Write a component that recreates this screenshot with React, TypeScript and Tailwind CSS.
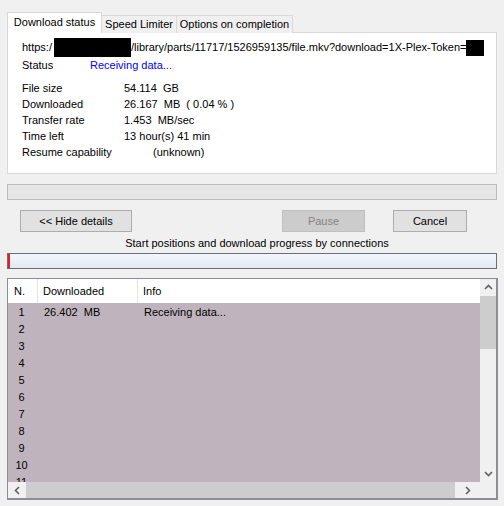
const rows = ["1", "2", "3", "4", "5", "6", "7", "8", "9", "10", "11"];

function Chevron({ dir }: { dir: "up" | "down" | "left" | "right" }) {
  const pts = {
    up: "1,6 4.5,2.5 8,6",
    down: "1,3 4.5,6.5 8,3",
    left: "6,1 2.5,4.5 6,8",
    right: "3,1 6.5,4.5 3,8",
  }[dir];
  return (
    <svg width="9" height="9" viewBox="0 0 9 9">
      <polyline points={pts} fill="none" stroke="#606060" strokeWidth="1.6" />
    </svg>
  );
}

function Field({ label, children }: { label: string; children: React.ReactNode }) {
  return (
    <div className="flex h-[16px] items-center">
      <span className="w-[102px] shrink-0">{label}</span>
      {children}
    </div>
  );
}

export default function App() {
  return (
    <div className="h-[506px] w-[504px] overflow-hidden bg-[#f0f0f0] px-[7px] pt-[12px] font-['Liberation_Sans',Arial,sans-serif] text-[11px] leading-none text-black">
      {/* tabs */}
      <div className="flex h-[21px] items-end">
        <div className="relative z-10 flex h-[21px] w-[95px] items-start justify-center border border-b-0 border-[#d9d9d9] bg-white pt-[4px]">
          Download status
        </div>
        <div className="flex h-[18px] w-[75px] items-center justify-center border border-l-0 border-b-0 border-[#d9d9d9] bg-[#f0f0f0]">
          Speed Limiter
        </div>
        <div className="flex h-[18px] w-[116px] items-center justify-center border border-l-0 border-b-0 border-[#d9d9d9] bg-[#f0f0f0]">
          Options on completion
        </div>
      </div>

      {/* tab panel */}
      <div className="-mt-px h-[142px] w-[490px] border border-[#d9d9d9] bg-white pl-[14px] pt-[5px]">
        <div className="flex h-[19px] items-center">
          <span>https:/</span>
          <span className="ml-[2px] inline-block h-[19px] w-[77px] bg-black" />
          <span>/library/parts/11717/1526959135/file.mkv?download=1X-Plex-Token=</span>
          <span className="inline-block h-[16px] w-[18px] bg-black" />
        </div>
        <div className="flex h-[16px] items-center">
          <span className="w-[68px]">Status</span>
          <span className="text-[#0000ff]">Receiving data...</span>
        </div>
        <div className="mt-[7px] flex flex-col">
          <Field label="File size">
            <span className="whitespace-pre">54.114  GB</span>
          </Field>
          <Field label="Downloaded">
            <span className="whitespace-pre">26.167  MB  ( 0.04 % )</span>
          </Field>
          <Field label="Transfer rate">
            <span className="whitespace-pre">1.453  MB/sec</span>
          </Field>
          <Field label="Time left">
            <span>13 hour(s) 41 min</span>
          </Field>
          <Field label="Resume capability">
            <span className="ml-[29px]">(unknown)</span>
          </Field>
        </div>
      </div>

      {/* overall progress */}
      <div className="mt-[10px] h-[16px] w-[490px] border border-[#bcbcbc] bg-[#e6e6e6]" />

      {/* buttons */}
      <div className="mt-[10px] flex h-[22px] w-[490px]">
        <button className="ml-[13px] h-[22px] w-[112px] border border-[#adadad] bg-[#e1e1e1]">
          &lt;&lt; Hide details
        </button>
        <button
          disabled
          className="ml-[150px] h-[22px] w-[83px] border border-[#bfbfbf] bg-[#cccccc] text-[#838383]"
        >
          Pause
        </button>
        <button className="ml-[28px] h-[22px] w-[74px] border border-[#adadad] bg-[#e1e1e1]">
          Cancel
        </button>
      </div>

      <div className="flex h-[21px] w-[490px] items-center justify-center pl-[10px] pt-[2px]">
        Start positions and download progress by connections
      </div>

      {/* connection bar */}
      <div className="flex h-[16px] w-[490px] border border-[#6d6d78] bg-gradient-to-b from-[#f4f6fb] to-[#e2e7f1]">
        <div className="h-full w-[2px] bg-[#e02020]" />
      </div>

      {/* connections list */}
      <div className="mt-[9px] flex h-[222px] w-[491px] flex-col border border-r-2 border-b-2 border-[#8d8d94] bg-white">
        <div className="flex min-h-0 flex-1">
          <div className="flex min-w-0 flex-1 flex-col">
            <div className="flex h-[24px] shrink-0 items-center bg-white">
              <div className="flex h-full w-[30px] items-center border-r border-[#e5e5e5] pl-[6px]">N.</div>
              <div className="flex h-full w-[100px] items-center border-r border-[#e5e5e5] pl-[5px]">Downloaded</div>
              <div className="flex h-full flex-1 items-center pl-[5px]">Info</div>
            </div>
            <div className="flex-1 overflow-hidden bg-[#bfb4bd] pt-[1px]">
              {rows.map((n) => (
                <div key={n} className="flex h-[17px] items-center">
                  <span className="w-[27px] text-center">{n}</span>
                  {n === "1" ? (
                    <>
                      <span className="ml-[9px] w-[100px] whitespace-pre">26.402  MB</span>
                      <span>Receiving data...</span>
                    </>
                  ) : null}
                </div>
              ))}
            </div>
          </div>
          {/* vertical scrollbar */}
          <div className="flex w-[16px] shrink-0 flex-col bg-[#f0f0f0]">
            <div className="flex h-[17px] items-center justify-center">
              <Chevron dir="up" />
            </div>
            <div className="h-[53px] bg-[#cdcdcd]" />
            <div className="flex-1" />
            <div className="flex h-[17px] items-center justify-center">
              <Chevron dir="down" />
            </div>
          </div>
        </div>
        {/* horizontal scrollbar */}
        <div className="flex h-[16px] shrink-0 bg-[#f0f0f0]">
          <div className="flex w-[18px] items-center justify-center">
            <Chevron dir="left" />
          </div>
          <div className="w-[429px] bg-[#cdcdcd]" />
          <div className="flex flex-1 items-center justify-center">
            <Chevron dir="right" />
          </div>
          <div className="w-[16px]" />
        </div>
      </div>
    </div>
  );
}
